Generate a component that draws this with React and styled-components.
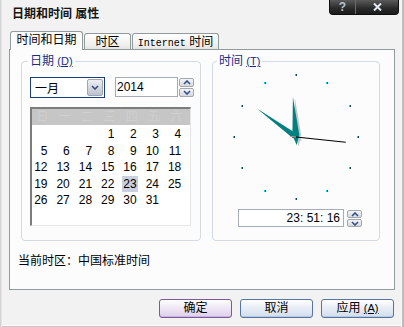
import React from 'react';
import styled, { createGlobalStyle } from 'styled-components';

const GlobalStyle = createGlobalStyle`
  html, body {
    margin: 0;
    padding: 0;
    background: #f2f2f2;
  }
  body {
    font-family: "Liberation Sans", "Noto Sans CJK SC", sans-serif;
    font-size: 12px;
    color: #000;
  }
`;

const Window = styled.div`
  width: 404px;
  height: 327px;
  box-sizing: border-box;
  background: #f2f2f2;
  display: flex;
  flex-direction: column;
  box-shadow: inset 1px 0 #d4d4d4, inset 2px 0 #e4e4e4, inset -2px 0 #bcbcbc,
    inset -3px 0 #f8f8f8, inset 0 -1px #c8c8c8, inset 0 -2px #fafafa;
`;

const TitleBar = styled.div`
  height: 31px;
  display: flex;
  justify-content: space-between;
  align-items: flex-start;
  padding: 0 5px 0 12px;
`;

const Title = styled.div`
  padding-top: 7px;
  line-height: 14px;
  font-weight: 700;
  color: #161616;
`;

const Caption = styled.div`
  display: flex;
  height: 15px;
  box-sizing: border-box;
  border: 1px solid #0e0e0e;
  border-top: none;
  border-radius: 0 0 4px 4px;
  background: linear-gradient(#5a5a5a, #2a2a2a 60%, #1c1c1c);
  overflow: hidden;
`;

const CaptionBtn = styled.div`
  width: ${(p) => p.$w}px;
  display: flex;
  align-items: center;
  justify-content: center;
  font-weight: 700;
  font-size: 12px;
  line-height: 12px;
  color: #b4c2da;
  & + & {
    border-left: 1px solid #6a6a6a;
  }
`;

const TabRow = styled.div`
  height: 18px;
  display: flex;
  align-items: flex-end;
  gap: 1px;
  padding-left: 10px;
`;

const Tab = styled.div`
  position: relative;
  box-sizing: border-box;
  width: ${(p) => p.$w}px;
  height: ${(p) => (p.$active ? 19 : 16)}px;
  margin-bottom: ${(p) => (p.$active ? -1 : 0)}px;
  z-index: ${(p) => (p.$active ? 1 : 0)};
  padding-top: 1px;
  line-height: 14px;
  text-align: center;
  white-space: nowrap;
  border: 1px solid #919b9c;
  border-bottom: none;
  border-radius: 3px 3px 0 0;
  background: ${(p) =>
    p.$active ? '#fcfcfc' : 'linear-gradient(#ffffff, #f0f0ee 70%, #e4e4e2)'};
`;

const Mono = styled.span`
  font-family: "Liberation Mono", monospace;
  font-size: 10px;
`;

const Panel = styled.div`
  margin-left: 9px;
  width: 386px;
  height: 241px;
  box-sizing: border-box;
  border: 1px solid #919b9c;
  background: #fcfcfc;
  padding-top: 11px;
  display: flex;
  flex-direction: column;
`;

const GroupRow = styled.div`
  display: flex;
  gap: 11px;
  margin-left: 11px;
`;

const Group = styled.div`
  position: relative;
  box-sizing: border-box;
  width: ${(p) => p.$w}px;
  height: 180px;
  border: 1px solid #d3dae2;
  border-radius: 4px;
  padding: ${(p) => p.$pad};
`;

const Legend = styled.div`
  position: absolute;
  top: -8px;
  left: ${(p) => p.$left}px;
  padding: 0 2px;
  background: #fcfcfc;
  line-height: 14px;
  color: #1a2d86;
  white-space: nowrap;
`;

const Key = styled.span`
  font-size: 11px;
  text-decoration: underline;
`;

const SelectRow = styled.div`
  display: flex;
  align-items: flex-start;
`;

const MonthSelect = styled.div`
  width: 75px;
  height: 21px;
  box-sizing: border-box;
  border: 1px solid #1c3c80;
  background: #fff;
  display: flex;
  align-items: center;
  justify-content: space-between;
  padding-left: 4px;
`;

const DropBtn = styled.div`
  width: 16px;
  height: 17px;
  box-sizing: border-box;
  margin-right: 1px;
  border: 1px solid #9ea6b4;
  border-radius: 2px;
  background: linear-gradient(#eceef2, #d0d4dc 60%, #bcc2cc);
  display: flex;
  align-items: center;
  justify-content: center;
`;

const TextField = styled.div`
  width: ${(p) => p.$w}px;
  height: ${(p) => p.$h}px;
  box-sizing: border-box;
  border: 1px solid #a5acb5;
  background: #fff;
  line-height: ${(p) => p.$h - 2}px;
  padding: 0 3px 0 1px;
  text-align: ${(p) => p.$align || 'left'};
  margin-left: ${(p) => p.$ml || 0}px;
`;

const Spinner = styled.div`
  display: flex;
  flex-direction: column;
  gap: 1px;
  margin: 1px 0 0 ${(p) => p.$ml}px;
`;

const SpinBtn = styled.div`
  width: 15px;
  height: ${(p) => p.$h}px;
  box-sizing: border-box;
  border: 1px solid #a4a8b0;
  border-radius: 2px;
  background: linear-gradient(#f4f4f6, #d6d8de);
  display: flex;
  align-items: center;
  justify-content: center;
`;

const Calendar = styled.div`
  margin-top: 9px;
  width: 161px;
  height: 119px;
  box-sizing: border-box;
  border-top: 2px solid #7c7c7c;
  border-left: 2px solid #7c7c7c;
  border-right: 1px solid #e6e6e6;
  border-bottom: 1px solid #e6e6e6;
  background: #fff;
`;

const WeekHeader = styled.div`
  height: 16px;
  background: #c6c6c6;
  color: #cfcfcf;
  display: grid;
  grid-template-columns: repeat(7, 22.3px);
  line-height: 16px;
`;

const Days = styled.div`
  padding-top: 1px;
  display: grid;
  grid-template-columns: repeat(7, 22.3px);
  grid-auto-rows: 16.5px;
  line-height: 16px;
`;

const Cell = styled.div`
  text-align: right;
  padding-right: 5.8px;
`;

const DayText = styled.span`
  padding: 1px 1px;
  background: ${(p) => (p.$sel ? '#c9cfde' : 'transparent')};
`;

const ClockFace = styled.svg`
  display: block;
  margin: 10px auto 0;
`;

const TimeRow = styled.div`
  display: flex;
  align-items: flex-start;
  margin-top: 7px;
  padding-left: 25px;
`;

const Zone = styled.div`
  margin: 13px 0 0 8px;
  line-height: 14px;
`;

const ButtonRow = styled.div`
  display: flex;
  justify-content: flex-end;
  gap: 8px;
  margin-top: 9px;
  padding-right: 10px;
`;

const Button = styled.div`
  width: 73px;
  height: 19px;
  box-sizing: border-box;
  border: 1px solid ${(p) => (p.$primary ? '#7a5a9c' : '#56749f')};
  border-radius: 3px;
  background: ${(p) =>
    p.$primary
      ? 'linear-gradient(#ffffff, #f0e8f6 45%, #ddd0ea)'
      : 'linear-gradient(#ffffff, #e8eef6 45%, #d2ddec)'};
  box-shadow: inset 0 -1px ${(p) => (p.$primary ? '#c8b4dc' : '#b8c8e0')};
  text-align: center;
  line-height: 17px;
`;

const Chevron = ({ up, color = '#32508c' }) => (
  <svg width="8" height="5" viewBox="0 0 8 5">
    <path
      d={up ? 'M1 4 L4 1 L7 4' : 'M1 1 L4 4 L7 1'}
      fill="none"
      stroke={color}
      strokeWidth="1.6"
    />
  </svg>
);

const SpinBox = ({ ml, h }) => (
  <Spinner $ml={ml}>
    <SpinBtn $h={h}>
      <Chevron up />
    </SpinBtn>
    <SpinBtn $h={h}>
      <Chevron />
    </SpinBtn>
  </Spinner>
);

const weekDays = ['日', '一', '二', '三', '四', '五', '六'];
const days = [null, null, null, ...Array.from({ length: 31 }, (_, i) => i + 1)];

const C = 65;
const rot = (list, deg) => {
  const r = (deg * Math.PI) / 180;
  const c = Math.cos(r);
  const s = Math.sin(r);
  return list
    .map(([x, y]) => `${(C + x * c - y * s).toFixed(1)},${(C + x * s + y * c).toFixed(1)}`)
    .join(' ');
};

const Hand = ({ len, w, tail, deg }) => {
  const shape = [
    [0, -len],
    [w, -2],
    [0, tail],
    [-w, -2],
  ];
  return (
    <g>
      <polygon points={rot(shape, deg)} fill="#c6c6c6" transform="translate(2 1)" />
      <polygon points={rot(shape, deg)} fill="#008080" />
    </g>
  );
};

const Clock = () => {
  const marks = Array.from({ length: 12 }, (_, i) => {
    const a = (i * 30 * Math.PI) / 180;
    return [Math.round(C + 62 * Math.sin(a)), Math.round(C - 62 * Math.cos(a))];
  });
  const sa = (96 * Math.PI) / 180;
  return (
    <ClockFace width="130" height="130" viewBox="0 0 130 130">
      {marks.map(([x, y], i) => (
        <g key={i}>
          <rect x={x - 1} y={y - 1} width="1" height="2" fill="#00e0e0" />
          <rect x={x} y={y - 1} width="1" height="2" fill="#004a5a" />
        </g>
      ))}
      <Hand len={48} w={2.8} tail={5} deg={306} />
      <Hand len={40} w={3.5} tail={8} deg={355.5} />
      <line
        x1={C - 6 * Math.sin(sa)}
        y1={C + 6 * Math.cos(sa)}
        x2={C}
        y2={C}
        stroke="#c89090"
        strokeWidth="1"
      />
      <line
        x1={C}
        y1={C}
        x2={C + 50 * Math.sin(sa)}
        y2={C - 50 * Math.cos(sa)}
        stroke="#000"
        strokeWidth="1.2"
      />
    </ClockFace>
  );
};

export default function App() {
  return (
    <>
      <GlobalStyle />
      <Window>
        <TitleBar>
          <Title>日期和时间 属性</Title>
          <Caption>
            <CaptionBtn $w={25}>?</CaptionBtn>
            <CaptionBtn $w={42}>
              <svg width="9" height="8" viewBox="0 0 9 8">
                <path d="M1 0.5 L8 7.5 M8 0.5 L1 7.5" stroke="#e4e8ee" strokeWidth="2" />
              </svg>
            </CaptionBtn>
          </Caption>
        </TitleBar>

        <TabRow>
          <Tab $active $w={73}>时间和日期</Tab>
          <Tab $w={47}>时区</Tab>
          <Tab $w={87}>
            <Mono>Internet</Mono> 时间
          </Tab>
        </TabRow>

        <Panel>
          <GroupRow>
            <Group $w={180} $pad="15px 0 0 8px">
              <Legend $left={6}>
                日期 <Key>(D)</Key>
              </Legend>
              <SelectRow>
                <MonthSelect>
                  <span>一月</span>
                  <DropBtn>
                    <Chevron color="#3a4c7c" />
                  </DropBtn>
                </MonthSelect>
                <TextField $w={63} $h={20} $ml={10}>
                  2014
                </TextField>
                <SpinBox ml={1} h={9} />
              </SelectRow>
              <Calendar>
                <WeekHeader>
                  {weekDays.map((d) => (
                    <Cell key={d}>{d}</Cell>
                  ))}
                </WeekHeader>
                <Days>
                  {days.map((d, i) => (
                    <Cell key={i}>{d && <DayText $sel={d === 23}>{d}</DayText>}</Cell>
                  ))}
                </Days>
              </Calendar>
            </Group>

            <Group $w={168} $pad="0">
              <Legend $left={4}>
                时间 <Key>(T)</Key>
              </Legend>
              <Clock />
              <TimeRow>
                <TextField $w={106} $h={18} $align="right">
                  23: 51: 16
                </TextField>
                <SpinBox ml={3} h={8} />
              </TimeRow>
            </Group>
          </GroupRow>
          <Zone>当前时区：中国标准时间</Zone>
        </Panel>

        <ButtonRow>
          <Button $primary>确定</Button>
          <Button>取消</Button>
          <Button>
            应用 <Key>(A)</Key>
          </Button>
        </ButtonRow>
      </Window>
    </>
  );
}
